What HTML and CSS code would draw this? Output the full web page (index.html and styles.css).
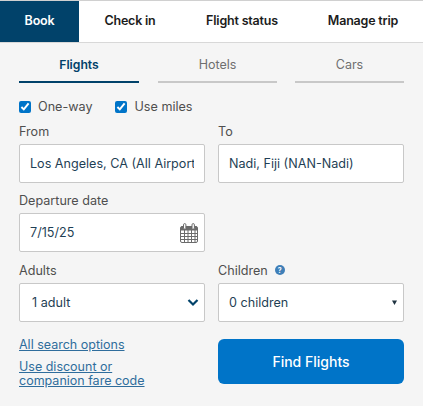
FILE: index.html
```html
<!DOCTYPE html>
<html>
<head>
    <meta name="viewport" content="width=device-width, initial-scale=1.0">
    <link rel="stylesheet" href="styles.css">
</head>
<body>
<div class="tabs">
    <div class="tab tab-book">Book</div>
    <div class="tab tab-checkin">Check in</div>
    <div class="tab tab-status">Flight status</div>
    <div class="tab tab-manage">Manage trip</div>
</div>
<div class="panel">
    <div class="subtabs">
        <div class="subtab subtab-flights active">Flights</div>
        <div class="subtab subtab-hotels">Hotels</div>
        <div class="subtab subtab-cars">Cars</div>
    </div>
    <div class="checks">
        <label class="check"><input type="checkbox" checked>One-way</label>
        <label class="check"><input type="checkbox" checked>Use miles</label>
    </div>
    <div class="grid">
        <div class="group group-from">
            <div class="label">From</div>
            <input class="field" type="text" value="Los Angeles, CA (All Airports)" readonly>
        </div>
        <div class="group group-from">
            <div class="label">To</div>
            <input class="field" type="text" value="Nadi, Fiji (NAN-Nadi)" readonly>
        </div>
        <div class="group group-date">
            <div class="label">Departure date</div>
            <div class="field field-date">
                <span>7/15/25</span>
                <svg class="calendar" width="18" height="20" viewBox="0 0 18 20">
                    <rect x="0.5" y="3.5" width="17" height="16" rx="1.5" fill="#fff" stroke="#6b6b6b"/>
                    <path d="M1 3.500h16v4H1z" fill="#6b6b6b"/>
                    <path d="M1 10.500h16M1 13.500h16M1 16.500h16M4.500 7v12M8 7v12M11.500 7v12M15 7v12" stroke="#6b6b6b" stroke-width="1" fill="none"/>
                    <path d="M3.500 5.500V1.800a1.200 1.200 0 0 1 2.400 0V5.500M12 5.500V1.800a1.200 1.200 0 0 1 2.400 0V5.500" fill="#fff" stroke="#6b6b6b"/>
                </svg>
            </div>
        </div>
        <div></div>
        <div class="group group-pax">
            <div class="label">Adults</div>
            <div class="field field-adults">
                <span>1 adult</span>
                <svg width="12" height="9" viewBox="0 0 12 9"><path d="M1.500 2l4.500 4.500L10.500 2" fill="none" stroke="#01426a" stroke-width="2.200"/></svg>
            </div>
        </div>
        <div class="group group-pax">
            <div class="label">Children <span class="info">?</span></div>
            <div class="field field-children">
                <span>0 children</span>
                <svg width="5" height="5" viewBox="0 0 5 5"><path d="M0 0.500h5L2.500 5z" fill="#1f3340"/></svg>
            </div>
        </div>
        <div class="links">
            <a class="link" href="#">All search options</a>
            <a class="link" href="#">Use discount or<br>companion fare code</a>
        </div>
        <button class="find">Find Flights</button>
    </div>
</div>
</body>
</html>
```

FILE: styles.css
```css
* {
    box-sizing: border-box;
}

body {
    margin: 0;
    background: #f5f5f5;
    font-family: Inter, "Liberation Sans", sans-serif;
    font-size: 12.6px;
    color: #4f4f4f;
}

.tabs {
    display: flex;
    height: 43px;
    background: #fff;
    border-top: 1px solid #d0d0d0;
    border-bottom: 1px solid #d8d8d8;
}

.tab {
    display: flex;
    align-items: center;
    justify-content: center;
    padding-bottom: 2px;
    font-size: 12.5px;
    font-weight: 600;
    color: #1c1c1c;
    letter-spacing: -0.2px;
}

.tab-book {
    width: 79px;
    background: #01426a;
    color: #fff;
}

.tab-checkin {
    width: 102px;
}

.tab-status {
    width: 122px;
}

.tab-manage {
    width: 120px;
}

.panel {
    padding: 0 19px;
}

.subtabs {
    display: flex;
    height: 40px;
    margin-bottom: 17px;
}

.subtab {
    display: flex;
    align-items: center;
    justify-content: center;
    padding-top: 5px;
    border-bottom: 2px solid #c8c8c8;
    color: #6f6f6f;
    font-size: 12.5px;
}

.subtab.active {
    border-bottom-color: #01426a;
    color: #01426a;
    font-size: 12.2px;
    font-weight: 600;
}

.subtab-flights {
    width: 120px;
    margin-right: 19px;
}

.subtab-hotels {
    width: 119px;
    margin-right: 18px;
}

.subtab-cars {
    width: 109px;
}

.checks {
    display: flex;
    height: 13px;
    margin-bottom: 8px;
}

.check {
    display: flex;
    align-items: center;
    margin-right: 23px;
}

.check input {
    width: 12px;
    height: 12px;
    margin: 0 7px 0 0;
    accent-color: #0074c8;
}

.grid {
    display: grid;
    grid-template-columns: 186px 186px;
    column-gap: 13px;
}

.group-from {
    margin-bottom: 7px;
}

.group-date {
    margin-bottom: 8px;
}

.group-pax {
    margin-bottom: 17px;
}

.label {
    display: flex;
    align-items: center;
    height: 20px;
    margin-bottom: 3px;
}

.info {
    display: flex;
    align-items: center;
    justify-content: center;
    width: 10px;
    height: 10px;
    margin-left: 7px;
    border-radius: 50%;
    background: #3f7fb8;
    color: #fff;
    font-size: 7px;
    font-weight: 700;
}

.field {
    display: flex;
    align-items: center;
    justify-content: space-between;
    width: 100%;
    height: 39px;
    padding: 0 10px;
    background: #fff;
    border: 1px solid #c8c8c8;
    border-radius: 2px;
    color: #1f3f55;
    font-family: inherit;
    font-size: 12.6px;
    white-space: nowrap;
    overflow: hidden;
}

.field-date {
    padding-right: 6px;
}

.field-adults {
    padding-left: 12px;
    padding-right: 5px;
}

.field-children {
    padding-right: 6px;
}

.links {
    display: flex;
    flex-direction: column;
    gap: 8px;
    margin-top: -1px;
}

.link {
    color: #2f6d9c;
    line-height: 14px;
    font-size: 12.5px;
}

.find {
    height: 45px;
    border: none;
    border-radius: 6px;
    background: #0074c8;
    color: #fff;
    font-family: inherit;
    font-size: 14px;
    font-weight: 500;
}
```
